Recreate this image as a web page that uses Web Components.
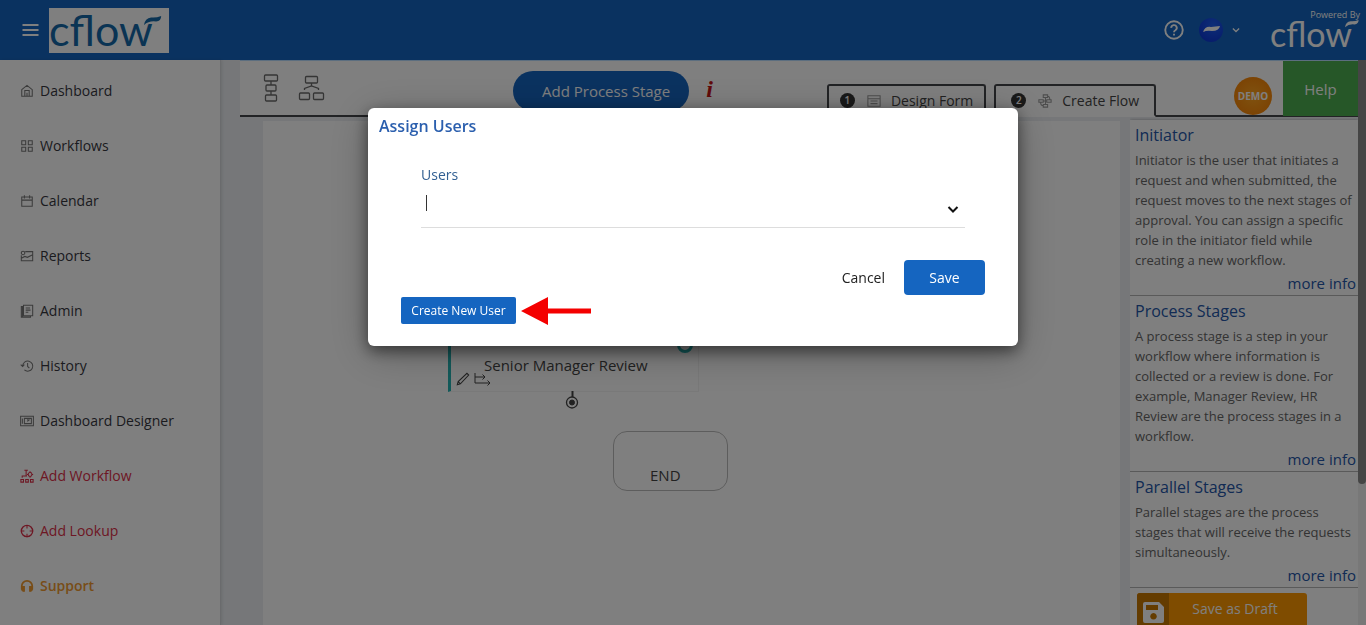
<!DOCTYPE html>
<html lang="en">
<head>
<meta charset="utf-8">
<title>Cflow - Create Flow</title>
<style>
  body { margin: 0; font: 14px/20px "Open Sans", sans-serif; overflow: hidden; }
</style>
</head>
<body>
<app-shell>
  <app-header slot="header"></app-header>
  <side-nav slot="nav">
    <nav-item icon="home">Dashboard</nav-item>
    <nav-item icon="grid">Workflows</nav-item>
    <nav-item icon="calendar">Calendar</nav-item>
    <nav-item icon="report">Reports</nav-item>
    <nav-item icon="admin">Admin</nav-item>
    <nav-item icon="history">History</nav-item>
    <nav-item icon="designer">Dashboard Designer</nav-item>
    <nav-item icon="addflow" tone="red">Add Workflow</nav-item>
    <nav-item icon="lookup" tone="red">Add Lookup</nav-item>
    <nav-item icon="support" tone="orange">Support</nav-item>
  </side-nav>
  <flow-toolbar slot="toolbar"></flow-toolbar>
  <flow-board slot="board"></flow-board>
  <help-panel slot="help">
    <help-card heading="Initiator">Initiator is the user that initiates a request and when submitted, the request moves to the next stages of approval. You can assign a specific role in the initiator field while creating a new workflow.</help-card>
    <help-card heading="Process Stages">A process stage is a step in your workflow where information is collected or a review is done. For example, Manager Review, HR Review are the process stages in a workflow.</help-card>
    <help-card heading="Parallel Stages">Parallel stages are the process stages that will receive the requests simultaneously.</help-card>
  </help-panel>
</app-shell>
<assign-dialog heading="Assign Users"></assign-dialog>

<script>
const ICONS = {
  home: '<path d="M2 6.5 8 1.5l6 5V14H2zM5.5 14V7.500h5V14M8 14v-4"/>',
  grid: '<path d="M2 2h4.500v4.500H2zM9.500 2H14v4.500H9.500zM2 9.500h4.500V14H2zM9.500 9.500H14V14H9.500z"/>',
  calendar: '<path d="M2 3.500h12V14H2zM2 7h12M5 1.500v3.500M11 1.500v3.500"/>',
  report: '<path d="M6 3h8.500v10.500h-13V7M1.500 10.500l4-2 3 1 6-3"/><circle cx="3.500" cy="4.500" r="2"/>',
  admin: '<path d="M4 1.500h10.500v12H4zM4 3H1.500v12H12v-1.500M6.500 4.500h5M6.500 7h5.500M6.500 9.500h3M2.800 3v11.500"/>',
  history: '<path d="M3 8a5.800 5.800 0 1 1 2 4.500M.8 6.500 3 8.500l2-2M8.700 4.500V8.500l2 2"/>',
  designer: '<path d="M.7 2.500h14.600v11H.7zM2.700 5v6M5 5v6h8V5zM9 5v3l2-1.500"/>',
  addflow: '<path d="M1 12h3v3H1zM6.500 12h3v3h-3zM12 12h3v3h-3zM5 1.500h4M7 1.500v6M2.500 10V8H8M11.500 2.500v1.500M11.500 8.500V10M8 6.300h1.500M13.500 6.300H15"/><circle cx="11.500" cy="6.300" r="2.200"/>',
  lookup: '<circle cx="8" cy="8" r="6.500" stroke-width="1.500"/><path d="M8 1v4M8 11v4M1 8h4M11 8h4"/>',
  support: '<path d="M2 12V8a6 6 0 0 1 12 0v4" stroke-width="2"/><path d="M2 8.500h3V14H3.500L2 12.500zM14 8.500h-3V14h1.500l1.500-1.500z" fill="currentColor"/>',
  menu: '<path d="M0 3h16M0 8h16M0 13h16" stroke-width="1.800"/>',
  help: '<circle cx="8" cy="8" r="7" stroke-width="1.500"/><path d="M5.800 6.300a2.200 2.200 0 1 1 3.300 1.900q-1.100.6-1.100 1.600M8 11v1.400" stroke-width="1.500"/>',
  chevron: '<path d="m3 5.500 5 5 5-5" stroke-width="2"/>',
  form: '<path d="M1 2h14v12H1zM1 5.500h14M4 8h8M4 11h8"/>',
  flow: '<path d="M6 1h5v3H6zM1 6.500h5v3H1zM10 6.500h5v3h-5zM6 12h5v3H6zM8.500 4v8M6 8h4M6 13.500q-3 0-3-4M11 2.500q2.500 0 2.500 4"/>',
  pencil: '<path d="m1.500 14.500 1-3.500L12.500 1.500l2 2L5 13.500zM2.500 11l2.500 2.500"/>'
};

// shared base: clones the element's markup into an open shadow root
class BaseElement extends HTMLElement {
  constructor() {
    super();
    this.attachShadow({ mode: "open" });
  }
  connectedCallback() {
    const tpl = document.createElement("template");
    tpl.innerHTML = `<style>:host,*{box-sizing:border-box}button,input{font:inherit;color:inherit;margin:0}a{text-decoration:none;color:inherit}${this.styles()}</style>${this.markup()}`;
    this.shadowRoot.replaceChildren(tpl.content.cloneNode(true));
  }
}

class UiIcon extends BaseElement {
  styles() {
    return `:host { display:block; flex:none; width:16px; height:16px; }
      svg { display:block; width:100%; height:100%; fill:none; stroke:currentColor; stroke-width:1.2; }`;
  }
  markup() {
    return `<svg viewBox="0 0 16 16" aria-hidden="true">${ICONS[this.getAttribute("name")]}</svg>`;
  }
}

class CflowLogo extends BaseElement {
  styles() {
    return `:host { display:block; position:relative; width:max-content; font:43px/44px Lato, sans-serif; }
      :host([small]) { font-size:34px; line-height:34px; }
      svg { position:absolute; right:-0.2em; top:0.2em; width:0.4em; overflow:visible; }
      :host([small]) svg { top:0.1em; }`;
  }
  markup() {
    return `<span>cflow</span><svg viewBox="0 0 17 9" aria-hidden="true"><path d="M0 9Q1 2 7 1.500 12 2 17 0q0 5-5 5.500Q5 4.500 0 9z" fill="currentColor"/></svg>`;
  }
}

class AppShell extends BaseElement {
  styles() {
    return `:host { display:grid; grid-template-rows:60px 1fr; height:100vh; background:#eceff3; overflow:hidden; }
      .body { display:grid; grid-template-columns:221px 1fr 8px; min-height:0; }
      .nav { background:#fff; border-right:1px solid #d4d7da; box-shadow:1px 0 3px rgba(0,0,0,.1); }
      .main { display:flex; flex-direction:column; margin-left:19px; min-width:0; min-height:0; border-top:1px solid #b8dcff; }
      .work { display:flex; flex:1; min-height:0; }
      .board { flex:1; display:flex; padding:4px 10px 0 23px; min-width:0; }
      .help { width:228px; padding-top:3px; overflow:hidden; }
      .track { background:#f0f0f0; }
      .thumb { height:75%; background:#8a8a8a; border-radius:0 0 4px 4px; }`;
  }
  markup() {
    return `<slot name="header"></slot>
      <div class="body">
        <div class="nav"><slot name="nav"></slot></div>
        <div class="main">
          <slot name="toolbar"></slot>
          <div class="work">
            <div class="board"><slot name="board"></slot></div>
            <div class="help"><slot name="help"></slot></div>
          </div>
        </div>
        <div class="track"><div class="thumb"></div></div>
      </div>`;
  }
}

class AppHeader extends BaseElement {
  styles() {
    return `:host { display:flex; align-items:center; background:#1565c0; color:#fff; padding:0 10px 0 22px; }
      button { padding:0; border:0; background:none; display:flex; align-items:center; }
      .menu { margin-right:10px; }
      .menu ui-icon { width:17px; }
      .brand { display:flex; width:120px; height:45px; background:#fff; color:#1569a8; }
      .right { display:flex; align-items:center; margin-left:auto; }
      .help { margin-right:15px; }
      .help ui-icon { width:20px; height:20px; }
      .avatar { width:24px; height:24px; border-radius:50%; background:radial-gradient(circle at 60% 30%,#1c5cf0,#0a2fd0); margin-right:8px; }
      .avatar svg { display:block; width:24px; }
      .account ui-icon { width:10px; height:10px; }
      .powered { display:flex; flex-direction:column; width:86px; margin-left:29px; }
      .powered small { font-size:9px; line-height:12px; align-self:flex-end; margin-right:-4px; }
      .powered cflow-logo { margin-top:-4px; }`;
  }
  markup() {
    return `<button class="menu" aria-label="Toggle menu"><ui-icon name="menu"></ui-icon></button>
      <a class="brand" href="#"><cflow-logo></cflow-logo></a>
      <div class="right">
        <button class="help" aria-label="Help"><ui-icon name="help"></ui-icon></button>
        <button class="account" aria-label="Account">
          <span class="avatar"><svg viewBox="0 0 24 24"><path d="M4 14q2-6 8-5l9-1q-1 5-8 5-5-1-9 1z" fill="#fff"/></svg></span>
          <ui-icon name="chevron"></ui-icon>
        </button>
        <div class="powered"><small>Powered By</small><cflow-logo small></cflow-logo></div>
      </div>`;
  }
}

class SideNav extends BaseElement {
  styles() {
    return `:host { display:block; padding-top:3px; }
      nav { display:flex; flex-direction:column; }`;
  }
  markup() { return `<nav><slot></slot></nav>`; }
}

class NavItem extends BaseElement {
  styles() {
    return `:host { display:block; color:#37373f; --icon:#777; }
      :host([tone=red]) { color:#dc2f48; --icon:#dc2f48; }
      :host([tone=orange]) { color:#f09a30; --icon:#f09a30; font-weight:600; }
      a { display:flex; align-items:center; gap:6px; height:55px; padding-left:20px; }
      ui-icon { width:14px; height:14px; color:var(--icon); }`;
  }
  markup() {
    return `<a href="#"><ui-icon name="${this.getAttribute("icon")}"></ui-icon><slot></slot></a>`;
  }
}

class FlowToolbar extends BaseElement {
  styles() {
    return `:host { display:flex; height:56px; background:#fff; border-bottom:2px solid #44464a; padding-left:23px; color:#444; }
      button { border:0; background:none; padding:0; }
      .view { display:flex; align-items:center; margin-right:19px; }
      .view svg { display:block; fill:none; stroke:#6a6a6a; stroke-width:1.3; }
      .add { align-self:flex-start; height:40px; margin:10px 17px 0 169px; padding:0 19px 0 29px; border-radius:20px; background:#1565c0; color:#fff; font-size:15px; white-space:nowrap; }
      .info { font:italic bold 24px/56px "Liberation Serif", serif; color:#c41414; }
      .tabs { display:flex; gap:8px; align-items:flex-end; margin:0 78px -2px auto; }
      .tab { display:flex; align-items:center; height:33px; padding:0 11px; border:2px solid #44464a; border-bottom-color:#fff; border-radius:3px 3px 0 0; background:#fff; white-space:nowrap; }
      .tab b { width:15px; height:15px; border-radius:50%; background:#333; color:#fff; font-size:10px; line-height:15px; font-weight:600; text-align:center; margin-right:12px; }
      .tab ui-icon { width:14px; height:14px; color:#999; margin-right:10px; }
      .tab.current { padding:0 15px; }
      .demo { align-self:flex-end; width:38px; height:38px; border-radius:50%; background:radial-gradient(circle,#ffa520,#f57c00); color:#fff; font-size:10px; font-weight:700; margin-right:11px; }
      .help { width:75px; height:55px; background:#4caf50; color:#fff; font-size:15px; }`;
  }
  markup() {
    return `<button class="view" aria-label="List view"><svg width="16" height="28" viewBox="0 0 16 28"><rect x="1.500" y="1" width="13" height="6" rx="1"/><rect x="3" y="11" width="10" height="6" rx="1"/><rect x="2.500" y="21" width="11" height="6" rx="1"/><path d="M8 7v4M8 17v4"/></svg></button>
      <button class="view" aria-label="Tree view"><svg width="27" height="26" viewBox="0 0 27 26"><rect x="7.500" y="1.500" width="12" height="6.500" rx="1"/><rect x="1.500" y="18" width="10" height="6.500" rx="1"/><rect x="15.500" y="18" width="10" height="6.500" rx="1"/><path d="M13.500 8v3.500M6.500 15v-1.500l7-2.500 7 2.500V15"/></svg></button>
      <button class="add">Add Process Stage</button>
      <span class="info">i</span>
      <div class="tabs">
        <button class="tab"><b>1</b><ui-icon name="form"></ui-icon>Design Form</button>
        <button class="tab current"><b>2</b><ui-icon name="flow"></ui-icon>Create Flow</button>
      </div>
      <button class="demo">DEMO</button>
      <button class="help">Help</button>`;
  }
}

class FlowBoard extends BaseElement {
  styles() {
    return `:host { display:block; flex:1; position:relative; background:#fff; color:#444; font-size:15px; overflow:hidden; }
      .stage { position:absolute; left:185px; top:150px; width:251px; height:121px; border:1px solid #f2f2f2; border-left:3px solid #26b5b5; }
      .stage .name { position:absolute; left:33px; bottom:16px; white-space:nowrap; }
      .tools { position:absolute; left:5px; bottom:5px; display:flex; gap:4px; align-items:center; }
      .tools ui-icon { width:14px; height:14px; }
      .tools svg, .port svg { display:block; fill:none; stroke:#444; }
      .badge { position:absolute; right:5px; bottom:38px; width:16px; height:16px; border:3px solid #26b5b5; border-radius:50%; }
      .port { position:absolute; left:302px; top:270px; }
      .end { position:absolute; left:350px; top:310px; width:115px; height:60px; border:1px solid #bbb; border-radius:14px; padding:33px 0 0 36px; }`;
  }
  markup() {
    return `<div class="stage">
        <span class="badge"></span>
        <span class="name">Senior Manager Review</span>
        <span class="tools"><ui-icon name="pencil"></ui-icon><svg width="18" height="14" viewBox="0 0 18 14"><path d="M1 1v10h15M1 5h10M8.500 2.500 11 5 8.500 7.500M13.500 8.500l2.500 2.500-2.500 2.500"/></svg></span>
      </div>
      <span class="port"><svg width="14" height="18" viewBox="0 0 14 18"><path d="M7.500 0v6" stroke-width="2"/><circle cx="7" cy="11.500" r="5.500" stroke-width="1.300"/><circle cx="7" cy="11.500" r="2.500" fill="#444"/></svg></span>
      <div class="end">END</div>`;
  }
}

class HelpPanel extends BaseElement {
  styles() {
    return `:host { display:block; background:#fff; min-height:100%; box-shadow:0 0 3px rgba(0,0,0,.3); }
      button { display:flex; width:170px; height:38px; margin:5px 0 0 7px; padding:0; border:0; border-radius:3px; overflow:hidden; background:#ff9800; color:#fff; }
      .disk { width:32px; height:38px; background:#c87800; padding:9px 6px; }
      .disk svg { display:block; }
      .label { flex:1; line-height:32px; padding-right:6px; }`;
  }
  markup() {
    return `<slot></slot>
      <button><span class="disk"><svg width="21" height="21" viewBox="0 0 21 21"><path fill="#fff" fill-rule="evenodd" d="M2 0h14l5 5v14q0 2-2 2H2q-2 0-2-2V2q0-2 2-2zM3 3v5h12V3zm7.500 8a3.300 3.300 0 1 0 .01 0z"/></svg></span><span class="label">Save as Draft</span></button>`;
  }
}

class HelpCard extends BaseElement {
  styles() {
    return `:host { display:block; padding:3px 5px 0 5px; border-bottom:1px solid #b5b5b5; }
      h2 { margin:0 0 3px; font-size:16px; line-height:24px; font-weight:400; color:#2456a8; }
      p { margin:0; font-size:13px; line-height:20px; color:#666; }
      a { display:block; margin-right:-3px; padding-top:2px; font-size:15px; line-height:23px; text-align:right; color:#2456a8; }`;
  }
  markup() {
    return `<h2>${this.getAttribute("heading")}</h2><p><slot></slot></p><a href="#">more info</a>`;
  }
}

class AssignDialog extends BaseElement {
  styles() {
    return `:host { position:fixed; inset:0; display:flex; justify-content:center; align-items:flex-start; padding:108px 0 0 20px; background:rgba(0,0,0,.5); }
      section { width:650px; padding:8px 33px 21px; border-radius:6px; background:#fff; box-shadow:0 5px 15px rgba(0,0,0,.5), 0 8px 40px rgba(0,0,0,.25); color:#222; }
      h1 { margin:0 0 0 -22px; font-size:16px; line-height:20px; font-weight:600; color:#2b5fae; }
      .field { margin:29px 20px 0; border-bottom:1px solid #ddd; }
      label { display:block; line-height:20px; color:#315f92; }
      .row { display:flex; align-items:center; height:42px; padding:0 5px 6px; }
      .caret { width:1px; height:16px; background:#333; }
      input { flex:1; border:0; outline:0; padding:0; background:none; }
      .row button { border:0; background:none; padding:12px 0 0; }
      .actions { display:flex; justify-content:flex-end; gap:19px; margin-top:32px; }
      .actions button { height:35px; padding:0; border:0; background:none; }
      .actions .save { width:81px; border-radius:4px; background:#1565c0; color:#fff; font-weight:500; }
      .create { display:flex; align-items:flex-start; gap:5px; margin-top:2px; }
      .create button { width:115px; height:27px; padding:0; border:0; border-radius:2px; background:#1565c0; color:#fff; font-size:12px; font-weight:500; }
      svg { display:block; }`;
  }
  markup() {
    return `<section role="dialog" aria-modal="true" aria-labelledby="title">
        <h1 id="title">${this.getAttribute("heading")}</h1>
        <div class="field">
          <label for="users">Users</label>
          <div class="row"><span class="caret"></span><input id="users" type="text" autocomplete="off">
            <button aria-label="Show users"><svg width="14" height="14" viewBox="0 0 14 14"><path d="m2.500 5 4.500 4.500L11.500 5" fill="none" stroke="#111" stroke-width="2"/></svg></button></div>
        </div>
        <div class="actions"><button>Cancel</button><button class="save">Save</button></div>
        <div class="create"><button>Create New User</button>
          <svg width="70" height="28" viewBox="0 0 70 28" aria-hidden="true"><path d="M0 14 27 0v11.500h43v5H27V28z" fill="#f40000"/></svg></div>
      </section>`;
  }
}

customElements.define("ui-icon", UiIcon);
customElements.define("cflow-logo", CflowLogo);
customElements.define("app-shell", AppShell);
customElements.define("app-header", AppHeader);
customElements.define("side-nav", SideNav);
customElements.define("nav-item", NavItem);
customElements.define("flow-toolbar", FlowToolbar);
customElements.define("flow-board", FlowBoard);
customElements.define("help-panel", HelpPanel);
customElements.define("help-card", HelpCard);
customElements.define("assign-dialog", AssignDialog);
</script>
</body>
</html>
